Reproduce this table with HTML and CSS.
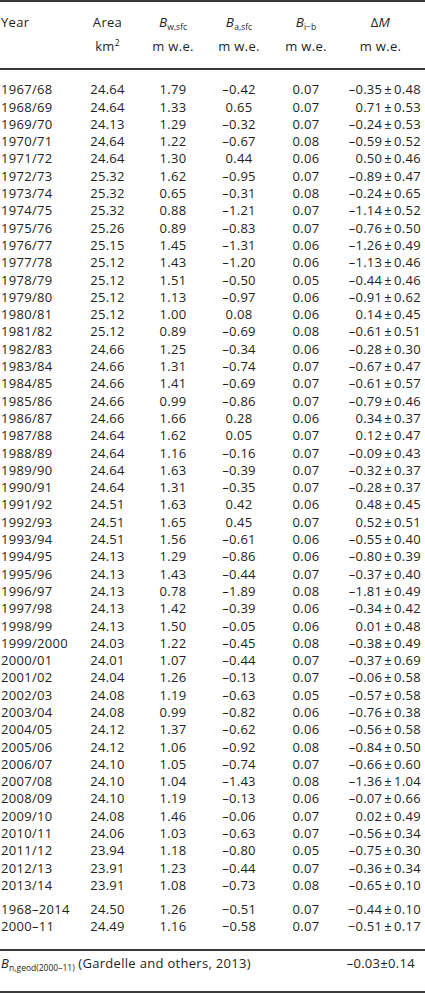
FILE: index.html
```html
<!DOCTYPE html>
<html lang="en">
  <head>
    <meta charset="utf-8">
    <title>Mass balance table</title>
    <link rel="stylesheet" href="styles.css">
  </head>
  <body>
    <table class="mb">
      <colgroup>
        <col class="c-year">
        <col class="c-area">
        <col class="c-bw">
        <col class="c-ba">
        <col class="c-bi">
        <col class="c-dm">
      </colgroup>
      <thead>
        <tr>
          <th class="year">Year</th>
          <th>Area<br>km<sup>2</sup></th>
          <th><i>B</i><sub>w,sfc</sub><br>m w.e.</th>
          <th><i>B</i><sub>a,sfc</sub><br>m w.e.</th>
          <th><i>B</i><sub>i−b</sub><br>m w.e.</th>
          <th class="dm">Δ<i>M</i><br>m w.e.</th>
        </tr>
      </thead>
      <tbody>
        <tr class="first"><td>1967/68</td><td>24.64</td><td>1.79</td><td>–0.42</td><td>0.07</td><td>–0.35<span class="pm">±</span>0.48</td></tr>
        <tr><td>1968/69</td><td>24.64</td><td>1.33</td><td>0.65</td><td>0.07</td><td>0.71<span class="pm">±</span>0.53</td></tr>
        <tr><td>1969/70</td><td>24.13</td><td>1.29</td><td>–0.32</td><td>0.07</td><td>–0.24<span class="pm">±</span>0.53</td></tr>
        <tr><td>1970/71</td><td>24.64</td><td>1.22</td><td>–0.67</td><td>0.08</td><td>–0.59<span class="pm">±</span>0.52</td></tr>
        <tr><td>1971/72</td><td>24.64</td><td>1.30</td><td>0.44</td><td>0.06</td><td>0.50<span class="pm">±</span>0.46</td></tr>
        <tr><td>1972/73</td><td>25.32</td><td>1.62</td><td>–0.95</td><td>0.07</td><td>–0.89<span class="pm">±</span>0.47</td></tr>
        <tr><td>1973/74</td><td>25.32</td><td>0.65</td><td>–0.31</td><td>0.08</td><td>–0.24<span class="pm">±</span>0.65</td></tr>
        <tr><td>1974/75</td><td>25.32</td><td>0.88</td><td>–1.21</td><td>0.07</td><td>–1.14<span class="pm">±</span>0.52</td></tr>
        <tr><td>1975/76</td><td>25.26</td><td>0.89</td><td>–0.83</td><td>0.07</td><td>–0.76<span class="pm">±</span>0.50</td></tr>
        <tr><td>1976/77</td><td>25.15</td><td>1.45</td><td>–1.31</td><td>0.06</td><td>–1.26<span class="pm">±</span>0.49</td></tr>
        <tr><td>1977/78</td><td>25.12</td><td>1.43</td><td>–1.20</td><td>0.06</td><td>–1.13<span class="pm">±</span>0.46</td></tr>
        <tr><td>1978/79</td><td>25.12</td><td>1.51</td><td>–0.50</td><td>0.05</td><td>–0.44<span class="pm">±</span>0.46</td></tr>
        <tr><td>1979/80</td><td>25.12</td><td>1.13</td><td>–0.97</td><td>0.06</td><td>–0.91<span class="pm">±</span>0.62</td></tr>
        <tr><td>1980/81</td><td>25.12</td><td>1.00</td><td>0.08</td><td>0.06</td><td>0.14<span class="pm">±</span>0.45</td></tr>
        <tr><td>1981/82</td><td>25.12</td><td>0.89</td><td>–0.69</td><td>0.08</td><td>–0.61<span class="pm">±</span>0.51</td></tr>
        <tr><td>1982/83</td><td>24.66</td><td>1.25</td><td>–0.34</td><td>0.06</td><td>–0.28<span class="pm">±</span>0.30</td></tr>
        <tr><td>1983/84</td><td>24.66</td><td>1.31</td><td>–0.74</td><td>0.07</td><td>–0.67<span class="pm">±</span>0.47</td></tr>
        <tr><td>1984/85</td><td>24.66</td><td>1.41</td><td>–0.69</td><td>0.07</td><td>–0.61<span class="pm">±</span>0.57</td></tr>
        <tr><td>1985/86</td><td>24.66</td><td>0.99</td><td>–0.86</td><td>0.07</td><td>–0.79<span class="pm">±</span>0.46</td></tr>
        <tr><td>1986/87</td><td>24.66</td><td>1.66</td><td>0.28</td><td>0.06</td><td>0.34<span class="pm">±</span>0.37</td></tr>
        <tr><td>1987/88</td><td>24.64</td><td>1.62</td><td>0.05</td><td>0.07</td><td>0.12<span class="pm">±</span>0.47</td></tr>
        <tr><td>1988/89</td><td>24.64</td><td>1.16</td><td>–0.16</td><td>0.07</td><td>–0.09<span class="pm">±</span>0.43</td></tr>
        <tr><td>1989/90</td><td>24.64</td><td>1.63</td><td>–0.39</td><td>0.07</td><td>–0.32<span class="pm">±</span>0.37</td></tr>
        <tr><td>1990/91</td><td>24.64</td><td>1.31</td><td>–0.35</td><td>0.07</td><td>–0.28<span class="pm">±</span>0.37</td></tr>
        <tr><td>1991/92</td><td>24.51</td><td>1.63</td><td>0.42</td><td>0.06</td><td>0.48<span class="pm">±</span>0.45</td></tr>
        <tr><td>1992/93</td><td>24.51</td><td>1.65</td><td>0.45</td><td>0.07</td><td>0.52<span class="pm">±</span>0.51</td></tr>
        <tr><td>1993/94</td><td>24.51</td><td>1.56</td><td>–0.61</td><td>0.06</td><td>–0.55<span class="pm">±</span>0.40</td></tr>
        <tr><td>1994/95</td><td>24.13</td><td>1.29</td><td>–0.86</td><td>0.06</td><td>–0.80<span class="pm">±</span>0.39</td></tr>
        <tr><td>1995/96</td><td>24.13</td><td>1.43</td><td>–0.44</td><td>0.07</td><td>–0.37<span class="pm">±</span>0.40</td></tr>
        <tr><td>1996/97</td><td>24.13</td><td>0.78</td><td>–1.89</td><td>0.08</td><td>–1.81<span class="pm">±</span>0.49</td></tr>
        <tr><td>1997/98</td><td>24.13</td><td>1.42</td><td>–0.39</td><td>0.06</td><td>–0.34<span class="pm">±</span>0.42</td></tr>
        <tr><td>1998/99</td><td>24.13</td><td>1.50</td><td>–0.05</td><td>0.06</td><td>0.01<span class="pm">±</span>0.48</td></tr>
        <tr><td>1999/2000</td><td>24.03</td><td>1.22</td><td>–0.45</td><td>0.08</td><td>–0.38<span class="pm">±</span>0.49</td></tr>
        <tr><td>2000/01</td><td>24.01</td><td>1.07</td><td>–0.44</td><td>0.07</td><td>–0.37<span class="pm">±</span>0.69</td></tr>
        <tr><td>2001/02</td><td>24.04</td><td>1.26</td><td>–0.13</td><td>0.07</td><td>–0.06<span class="pm">±</span>0.58</td></tr>
        <tr><td>2002/03</td><td>24.08</td><td>1.19</td><td>–0.63</td><td>0.05</td><td>–0.57<span class="pm">±</span>0.58</td></tr>
        <tr><td>2003/04</td><td>24.08</td><td>0.99</td><td>–0.82</td><td>0.06</td><td>–0.76<span class="pm">±</span>0.38</td></tr>
        <tr><td>2004/05</td><td>24.12</td><td>1.37</td><td>–0.62</td><td>0.06</td><td>–0.56<span class="pm">±</span>0.58</td></tr>
        <tr><td>2005/06</td><td>24.12</td><td>1.06</td><td>–0.92</td><td>0.08</td><td>–0.84<span class="pm">±</span>0.50</td></tr>
        <tr><td>2006/07</td><td>24.10</td><td>1.05</td><td>–0.74</td><td>0.07</td><td>–0.66<span class="pm">±</span>0.60</td></tr>
        <tr><td>2007/08</td><td>24.10</td><td>1.04</td><td>–1.43</td><td>0.08</td><td>–1.36<span class="pm">±</span>1.04</td></tr>
        <tr><td>2008/09</td><td>24.10</td><td>1.19</td><td>–0.13</td><td>0.06</td><td>–0.07<span class="pm">±</span>0.66</td></tr>
        <tr><td>2009/10</td><td>24.08</td><td>1.46</td><td>–0.06</td><td>0.07</td><td>0.02<span class="pm">±</span>0.49</td></tr>
        <tr><td>2010/11</td><td>24.06</td><td>1.03</td><td>–0.63</td><td>0.07</td><td>–0.56<span class="pm">±</span>0.34</td></tr>
        <tr><td>2011/12</td><td>23.94</td><td>1.18</td><td>–0.80</td><td>0.05</td><td>–0.75<span class="pm">±</span>0.30</td></tr>
        <tr><td>2012/13</td><td>23.91</td><td>1.23</td><td>–0.44</td><td>0.07</td><td>–0.36<span class="pm">±</span>0.34</td></tr>
        <tr><td>2013/14</td><td>23.91</td><td>1.08</td><td>–0.73</td><td>0.08</td><td>–0.65<span class="pm">±</span>0.10</td></tr>
        <tr class="sum first-sum"><td>1968–2014</td><td>24.50</td><td>1.26</td><td>−0.51</td><td>0.07</td><td>−0.44<span class="pm">±</span>0.10</td></tr>
        <tr class="sum last-sum"><td>2000–11</td><td>24.49</td><td>1.16</td><td>−0.58</td><td>0.07</td><td>−0.51<span class="pm">±</span>0.17</td></tr>
      </tbody>
      <tfoot>
        <tr>
          <td colspan="5" class="geod"><i>B</i><sub>n,geod(2000–11)</sub> (Gardelle and others, 2013)</td>
          <td class="geod-val">–0.03±0.14</td>
        </tr>
      </tfoot>
    </table>
  </body>
</html>
```

FILE: styles.css
```css
body{
  margin: 0;
  background-color: #fff;
  color: #231f20;
  font-family: "Open Sans", "Liberation Sans", sans-serif;
  font-size: 13px;
  letter-spacing: 0.3px;
}
.mb{
  width: 425px;
  table-layout: fixed;
  border-collapse: separate;
  border-spacing: 0;
}
.c-year{ width: 75px; }
.c-area{ width: 65px; }
.c-bw{ width: 66px; }
.c-ba{ width: 66px; }
.c-bi{ width: 68px; }
.c-dm{ width: 85px; }

th, td{
  padding: 0;
  font-weight: normal;
  text-align: center;
  white-space: nowrap;
  line-height: 17.3px;
}
thead th{
  line-height: 24px;
  vertical-align: top;
  padding: 8px 0 10px;
  border-top: 2px solid #3a3a3a;
  border-bottom: 2px solid #3a3a3a;
}
th i{
  font-size: 13.5px;
}
th.year, td:first-child{
  text-align: left;
  padding-left: 1px;
}
td:last-child{
  text-align: right;
  padding-right: 4px;
}
th.dm{
  padding-right: 4px;
}
sub{
  font-size: 8.5px;
  letter-spacing: 0;
  line-height: 0;
  vertical-align: -3px;
}
sup{
  font-size: 8.5px;
  line-height: 0;
  vertical-align: 5px;
}
.pm{
  padding: 0 2px;
}
tr.first td{
  padding-top: 11.3px;
}
tr.first-sum td{
  padding-top: 6.3px;
}
tr.last-sum td{
  padding-bottom: 14px;
}
tfoot td{
  border-top: 2px solid #3a3a3a;
  border-bottom: 2px solid #3a3a3a;
  padding-top: 4.3px;
  padding-bottom: 18.4px;
}
td.geod{
  text-align: left;
}
td.geod-val{
  padding-right: 10px;
}
```
